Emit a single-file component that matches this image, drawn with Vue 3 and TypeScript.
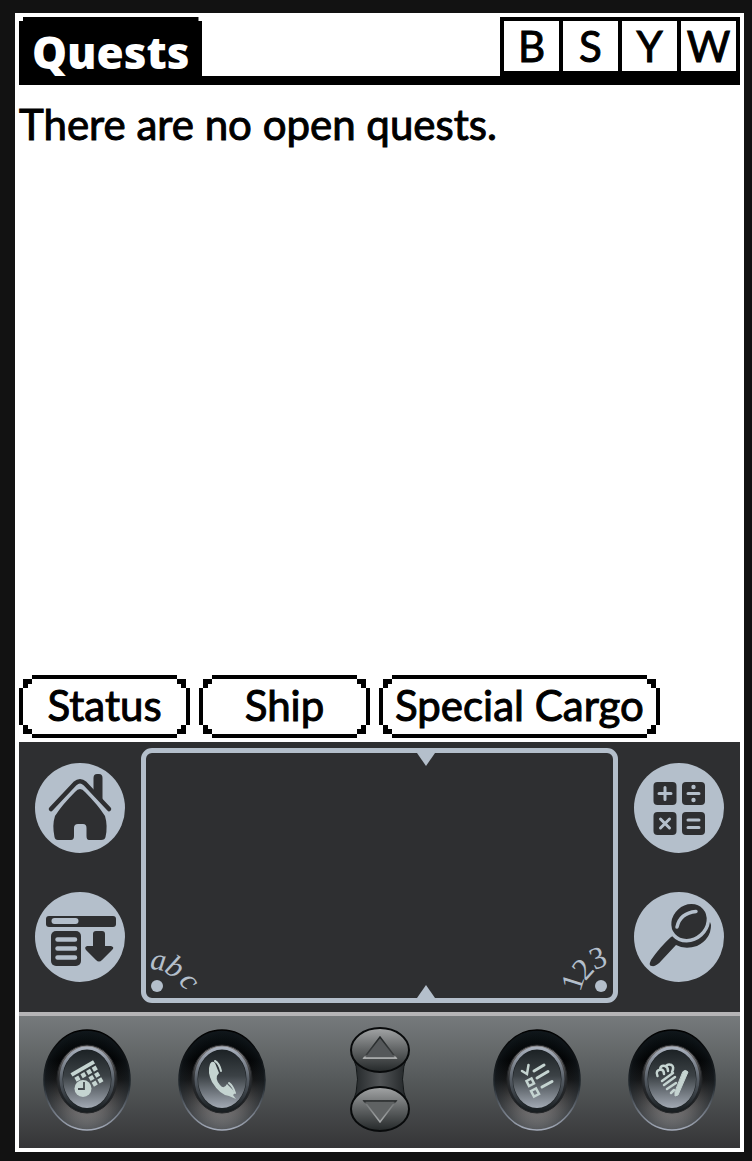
<script setup lang="ts">
interface Shortcut {
  key: string
  label: string
}

const shortcuts: Shortcut[] = [
  { key: 'B', label: 'Buy cargo' },
  { key: 'S', label: 'Sell cargo' },
  { key: 'Y', label: 'Shipyard' },
  { key: 'W', label: 'Warp' },
]

const actions: string[] = ['Status', 'Ship', 'Special Cargo']

const leftKeys = ['Calendar', 'Phone']
const rightKeys = ['Tasks', 'Notes']
</script>

<template>
  <main class="device">
    <header class="titlebar">
      <h1 class="title">Quests</h1>
      <nav class="shortcuts">
        <button v-for="s in shortcuts" :key="s.key" type="button" :aria-label="s.label">{{ s.key }}</button>
      </nav>
    </header>

    <section class="content">
      <p>There are no open quests.</p>
    </section>

    <div class="actions">
      <button v-for="a in actions" :key="a" type="button" class="pill">{{ a }}</button>
    </div>

    <section class="silk">
      <div class="side">
        <button type="button" class="round" aria-label="Home">
          <svg viewBox="0 0 90 90">
            <circle cx="45" cy="45" r="45" class="light" />
            <path d="M16 46 L40 20.500 Q45 16 50 20.500 L74 46" class="line-dark" stroke-width="4.500" />
            <path d="M58.500 15 Q58.500 11 62 11 H64 Q67.500 11 67.500 15 V37 L58.500 28Z" class="dark" />
            <path d="M40 29 Q45 23 50 29 Q63 42 70 53 Q73 63 70.500 74 Q70 77 66 77 H54 Q51.500 77 51.500 73 V65 Q51.500 61 48 61 H43 Q39 61 39 65 V73 Q39 77 36 77 H23 Q20 77 19.500 74 Q17 62 20 53 Q27 42 40 29Z" class="dark" />
          </svg>
        </button>
        <button type="button" class="round" aria-label="Menu">
          <svg viewBox="0 0 90 90">
            <circle cx="45" cy="45" r="45" class="light" />
            <rect x="11" y="24" width="70" height="11" rx="3" class="dark" />
            <rect x="16.500" y="26" width="27" height="6" rx="3" class="light" />
            <rect x="16" y="39" width="30" height="35" rx="5" class="dark" />
            <path d="M22.500 47.500H40 M22.500 56.500H40 M22.500 65.500H40" class="line-light" stroke-width="4.500" />
            <path d="M58 42 Q58 39 61 39 H67 Q70 39 70 42 V54 H76 Q80 55 77 58 L67 68 Q64 71 61 68 L51 58 Q49 55 52 54 H58Z" class="dark" />
          </svg>
        </button>
      </div>

      <div class="pad">
        <svg class="notch notch-top" viewBox="0 0 18 13"><path d="M0 0H18L9 13Z" class="light" /></svg>
        <svg class="notch notch-bottom" viewBox="0 0 18 13"><path d="M0 13H18L9 0Z" class="light" /></svg>
        <svg class="hint hint-left" viewBox="0 0 70 66">
          <circle cx="11" cy="54" r="6" class="light" />
          <g class="glyphs" font-style="italic">
            <text transform="translate(12 32) rotate(8)" y="6">a</text>
            <text transform="translate(29 35) rotate(32)" y="10">b</text>
            <text transform="translate(41 51) rotate(52)" y="6">c</text>
          </g>
        </svg>
        <svg class="hint hint-right" viewBox="0 0 70 66">
          <circle cx="58" cy="54" r="6" class="light" />
          <g class="glyphs">
            <text transform="translate(30 50) rotate(-72)" y="10">1</text>
            <text transform="translate(40 37) rotate(-48)" y="10">2</text>
            <text transform="translate(55 26) rotate(-22)" y="10">3</text>
          </g>
        </svg>
      </div>

      <div class="side">
        <button type="button" class="round" aria-label="Calculator">
          <svg viewBox="0 0 90 90">
            <circle cx="45" cy="45" r="45" class="light" />
            <rect x="19.500" y="19" width="23" height="23" rx="4" class="dark" />
            <rect x="48" y="19" width="23" height="23" rx="4" class="dark" />
            <rect x="19.500" y="49" width="23" height="23" rx="4" class="dark" />
            <rect x="48" y="49" width="23" height="23" rx="4" class="dark" />
            <path d="M25 30.500H37 M31 24.500V36.500 M54 30.500H65 M26.500 56L35.500 65 M35.500 56L26.500 65 M54 57H65 M54 64.500H65" class="line-light" stroke-width="3" />
            <circle cx="59.500" cy="24" r="2.200" class="light" />
            <circle cx="59.500" cy="37" r="2.200" class="light" />
          </svg>
        </button>
        <button type="button" class="round" aria-label="Find">
          <svg viewBox="0 0 90 90">
            <circle cx="45" cy="45" r="45" class="light" />
            <path d="M37 45 Q26 55 17 68 Q14 74 18 74 Q22 75 28 68 L42 53 Q51 58 63 54 Q77 47 77 33 L75 27 L55 35Z" class="dark" />
            <ellipse cx="55" cy="29.500" rx="20.500" ry="18" transform="rotate(-42 55 29.500)" class="dark" stroke="#b4bfcb" stroke-width="3.500" />
            <path d="M43 35 Q46 21 62 19.500" class="line-light" stroke-width="3.500" />
          </svg>
        </button>
      </div>
    </section>

    <section class="keys">
      <svg class="defs" aria-hidden="true">
        <defs>
          <linearGradient id="well" x1="0" y1="0" x2="0" y2="1">
            <stop offset="0" stop-color="#0a1013" />
            <stop offset="0.300" stop-color="#020304" />
            <stop offset="0.500" stop-color="#161718" />
            <stop offset="0.800" stop-color="#626162" />
            <stop offset="1" stop-color="#939192" />
          </linearGradient>
          <radialGradient id="wellside">
            <stop offset="0.700" stop-color="#10181c" stop-opacity="0" />
            <stop offset="1" stop-color="#182026" stop-opacity="0.500" />
          </radialGradient>
          <linearGradient id="rim" x1="0" y1="0" x2="0" y2="1">
            <stop offset="0" stop-color="#000000" />
            <stop offset="0.550" stop-color="#20272c" />
            <stop offset="1" stop-color="#a5acba" />
          </linearGradient>
          <linearGradient id="collar" x1="0" y1="0" x2="0" y2="1">
            <stop offset="0" stop-color="#858283" />
            <stop offset="0.500" stop-color="#2b2d30" />
            <stop offset="1" stop-color="#171b1e" />
          </linearGradient>
          <linearGradient id="ring" x1="0" y1="0" x2="0" y2="1">
            <stop offset="0" stop-color="#a9b1bd" />
            <stop offset="0.500" stop-color="#565d65" />
            <stop offset="1" stop-color="#1a1f22" />
          </linearGradient>
          <linearGradient id="face" x1="0" y1="0" x2="0" y2="1">
            <stop offset="0" stop-color="#1c2225" />
            <stop offset="0.450" stop-color="#3c4246" />
            <stop offset="1" stop-color="#a2a9b3" />
          </linearGradient>
          <linearGradient id="knob" x1="0" y1="0" x2="0" y2="1">
            <stop offset="0" stop-color="#a3a5a6" />
            <stop offset="0.500" stop-color="#606364" />
            <stop offset="1" stop-color="#242829" />
          </linearGradient>
          <linearGradient id="waist">
            <stop offset="0" stop-color="#202426" />
            <stop offset="0.500" stop-color="#515456" />
            <stop offset="1" stop-color="#202426" />
          </linearGradient>
          <linearGradient id="up" x1="0" y1="0" x2="0" y2="1">
            <stop offset="0" stop-color="#222627" />
            <stop offset="0.850" stop-color="#3a3d3e" />
            <stop offset="1" stop-color="#c4c6c6" />
          </linearGradient>
          <linearGradient id="down" x1="0" y1="0" x2="0" y2="1">
            <stop offset="0" stop-color="#1c1f20" />
            <stop offset="0.150" stop-color="#777a7b" />
            <stop offset="1" stop-color="#a5a8a9" />
          </linearGradient>
        </defs>
      </svg>

      <div class="pair">
        <button v-for="k in leftKeys" :key="k" type="button" class="hard" :aria-label="k">
          <svg viewBox="0 0 88 102">
            <ellipse cx="44" cy="51" rx="43" ry="50" fill="url(#well)" />
            <ellipse cx="44" cy="51" rx="43" ry="50" fill="url(#wellside)" stroke="url(#rim)" stroke-width="1.500" />
            <ellipse cx="44" cy="50" rx="30" ry="34" fill="url(#collar)" stroke="#242628" />
            <ellipse cx="44" cy="50" rx="26" ry="31" fill="#1b2023" stroke="url(#ring)" stroke-width="3" />
            <ellipse cx="44" cy="50" rx="24" ry="29" fill="url(#face)" />
            <g v-if="k === 'Calendar'" class="mint">
              <g transform="translate(28 45) rotate(-30)">
                <rect x="0" y="-1" width="26" height="4" />
                <rect x="1" y="5" width="4.500" height="4.500" />
                <rect x="8" y="5" width="4.500" height="4.500" />
                <rect x="14.500" y="5" width="4.500" height="4.500" />
                <rect x="21" y="5" width="4.500" height="4.500" />
                <rect x="13.500" y="11.500" width="4.500" height="4.500" />
                <rect x="20" y="11.500" width="4.500" height="4.500" />
                <rect x="13.500" y="18" width="4.500" height="4.500" />
                <rect x="20" y="18" width="4.500" height="4.500" />
              </g>
              <circle cx="40" cy="59.500" r="8.500" />
              <path d="M41 53V60H35" fill="none" stroke="#444a4e" stroke-width="1.800" />
            </g>
            <g v-else class="mint">
              <path d="M32 35Q29 43 34 53Q42 66 51 67L58 70L55 66Q58 64 54 60L49 55Q46 61 42 56Q36 49 41 44L37 34Q34 31 32 35Z" />
              <path d="M37 32Q41 34 43 42 M51 54Q55 57 57 64" fill="none" stroke="#c5d4d1" stroke-width="2" stroke-linecap="round" />
            </g>
          </svg>
        </button>
      </div>

      <div class="rocker">
        <svg viewBox="0 0 60 106">
          <path d="M2 28Q13 53 2 79H58Q47 53 58 28Z" fill="url(#waist)" stroke="#141819" />
          <ellipse cx="30" cy="24" rx="29" ry="22" fill="url(#knob)" stroke="#080a0b" stroke-width="2" />
          <ellipse cx="30" cy="83" rx="29" ry="22" fill="url(#knob)" stroke="#080a0b" stroke-width="2" />
          <path d="M14 32L30 11L46 32Z" fill="#55585a" stroke="url(#up)" stroke-width="1.500" />
          <path d="M14 75H46L30 96Z" fill="#5f6263" stroke="url(#down)" stroke-width="1.500" />
        </svg>
        <button type="button" aria-label="Scroll up"></button>
        <button type="button" aria-label="Scroll down"></button>
      </div>

      <div class="pair">
        <button v-for="k in rightKeys" :key="k" type="button" class="hard" :aria-label="k">
          <svg viewBox="0 0 88 102">
            <ellipse cx="44" cy="51" rx="43" ry="50" fill="url(#well)" />
            <ellipse cx="44" cy="51" rx="43" ry="50" fill="url(#wellside)" stroke="url(#rim)" stroke-width="1.500" />
            <ellipse cx="44" cy="50" rx="30" ry="34" fill="url(#collar)" stroke="#242628" />
            <ellipse cx="44" cy="50" rx="26" ry="31" fill="#1b2023" stroke="url(#ring)" stroke-width="3" />
            <ellipse cx="44" cy="50" rx="24" ry="29" fill="url(#face)" />
            <g v-if="k === 'Tasks'" class="sketch">
              <path d="M29 42L34 45L35.500 36" stroke-width="2.500" />
              <path d="M41 42L51 36 M44 49L55 42.500 M49 58L59 52.500" stroke-width="3" />
              <path d="M33.500 52L38.500 49.500L41 54.500L36 57Z M38 62L43 59.500L46 65L41 67.500Z" stroke-width="2.500" />
            </g>
            <g v-else class="sketch">
              <path d="M55 42.500Q57.500 40 60 43L50 66L47 67V63Z" fill="#c5d4d1" stroke-width="1" />
              <path d="M29.500 47Q27 41 33 40.500Q36 41 36 45 M32 40Q33 36 37 37Q40 38 40 42 M38 37Q40 34.500 43.500 36Q46.500 38 44 43 M34 52L45 44 M36 56L47 48 M39 60L48 54 M43 64L46 61" stroke-width="2.500" />
            </g>
          </svg>
        </button>
      </div>
    </section>
  </main>
</template>

<style>
html,
body {
  margin: 0;
  background: #121212;
}
</style>

<style scoped>
* {
  box-sizing: border-box;
}

.device {
  display: flex;
  flex-direction: column;
  min-height: calc(100vh - 22px);
  margin: 13px 8px 9px 15px;
  padding: 4px;
  background: #fff;
  color: #000;
  font-family: Lato, "Liberation Sans", sans-serif;
  font-size: 42px;
  line-height: 48px;
  -webkit-text-stroke: 1px currentColor;
}

button {
  margin: 0;
  padding: 0;
  border: 0;
  background: none;
  color: inherit;
  font: inherit;
  cursor: pointer;
}

svg {
  display: block;
}

.titlebar {
  display: flex;
  justify-content: space-between;
  align-items: stretch;
  height: 68px;
  border-bottom: 9px solid #000;
}

.title {
  margin: 0;
  padding: 11px 13px 0;
  background: #000;
  clip-path: polygon(4px 0, calc(100% - 4px) 0, calc(100% - 4px) 4px, 100% 4px, 100% 100%, 0 100%, 0 4px, 4px 4px);
  color: #fff;
  font-family: "Open Sans", sans-serif;
  font-size: 44px;
  font-weight: 800;
  line-height: 48px;
  -webkit-text-stroke: 0;
}

.shortcuts {
  display: flex;
  gap: 4px;
  padding: 4px;
  background: #000;
}

.shortcuts button {
  width: 55px;
  height: 50px;
  background: #fff;
  line-height: 50px;
}

.content {
  flex: 1;
  padding-top: 15px;
}

.content p {
  margin: 0;
}

.actions {
  display: flex;
  gap: 9px;
  margin-bottom: 4px;
}

.pill {
  min-width: 171px;
  height: 63px;
  padding: 0 16px 4px;
  background:
    linear-gradient(#000, #000) 50% 0 / calc(100% - 26px) 4px,
    linear-gradient(#000, #000) 50% 100% / calc(100% - 26px) 4px,
    linear-gradient(#000, #000) 0 50% / 4px calc(100% - 26px),
    linear-gradient(#000, #000) 100% 50% / 4px calc(100% - 26px),
    linear-gradient(#000, #000) left 4px top 4px / 9px 5px,
    linear-gradient(#000, #000) left 4px top 4px / 5px 9px,
    linear-gradient(#000, #000) right 4px top 4px / 9px 5px,
    linear-gradient(#000, #000) right 4px top 4px / 5px 9px,
    linear-gradient(#000, #000) left 4px bottom 4px / 9px 5px,
    linear-gradient(#000, #000) left 4px bottom 4px / 5px 9px,
    linear-gradient(#000, #000) right 4px bottom 4px / 9px 5px,
    linear-gradient(#000, #000) right 4px bottom 4px / 5px 9px;
  background-repeat: no-repeat;
}

.silk {
  display: grid;
  grid-template-columns: 122px 1fr 122px;
  height: 270px;
  background: #2e2f31;
}

.side {
  display: flex;
  flex-direction: column;
  align-items: center;
  gap: 39px;
  padding-top: 21px;
}

.round,
.round svg {
  width: 90px;
  height: 90px;
}

.round {
  border-radius: 50%;
}

.light {
  fill: #b4bfcb;
}

.dark {
  fill: #2e2f31;
}

.line-light,
.line-dark {
  fill: none;
  stroke: #b4bfcb;
  stroke-linecap: round;
  stroke-linejoin: round;
}

.line-dark {
  stroke: #2e2f31;
}

.pad {
  position: relative;
  margin: 6px 0 9px;
  border: 5px solid #b4bfcb;
  border-radius: 11px;
}

.notch {
  position: absolute;
  left: 58%;
  width: 18px;
  height: 13px;
}

.notch-top {
  top: 0;
}

.notch-bottom {
  bottom: 0;
}

.hint {
  position: absolute;
  bottom: 0;
  width: 70px;
  height: 66px;
  overflow: visible;
}

.hint-left {
  left: 0;
}

.hint-right {
  right: 0;
}

.glyphs {
  fill: #b4bfcb;
  font-family: "Liberation Serif", serif;
  font-size: 31px;
  text-anchor: middle;
  -webkit-text-stroke: 0;
}

.keys {
  position: relative;
  display: flex;
  justify-content: space-between;
  align-items: flex-start;
  height: 136px;
  padding: 13px 24px 0;
  border-top: 4px solid #b5b4b6;
  background: linear-gradient(#767a7c, #545859 50%, #353537);
}

.defs {
  position: absolute;
  width: 0;
  height: 0;
}

.pair {
  display: flex;
  gap: 47px;
}

.hard,
.hard svg {
  width: 88px;
  height: 102px;
}

.mint {
  fill: #c5d4d1;
}

.sketch {
  fill: none;
  stroke: #c5d4d1;
  stroke-linecap: round;
}

.rocker {
  display: grid;
  grid-template: 53px 53px / 60px;
  margin-top: -3px;
}

.rocker svg {
  grid-area: 1 / 1 / 3 / 2;
  width: 60px;
  height: 106px;
}

.rocker button:nth-of-type(1) {
  grid-area: 1 / 1;
}

.rocker button:nth-of-type(2) {
  grid-area: 2 / 1;
}
</style>
